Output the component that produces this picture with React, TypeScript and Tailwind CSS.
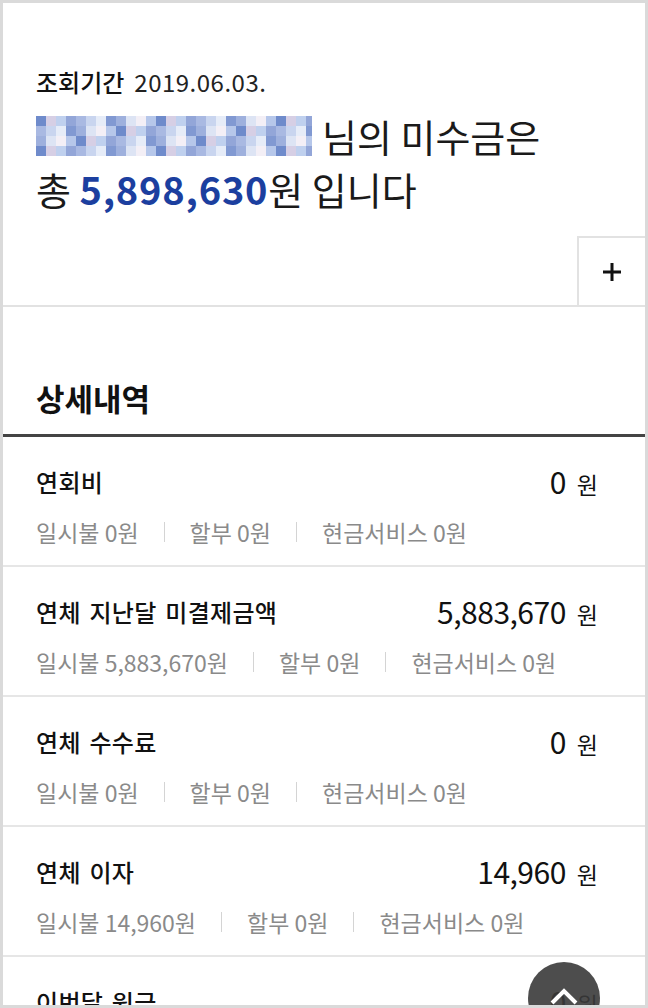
import { useMemo } from 'react'

const FONT = { fontFamily: '"Noto Sans CJK KR", "Noto Sans", sans-serif' }

type Item = {
  title: string
  amount: string
  lump: string
  installment: string
  cash: string
}

const ITEMS: Item[] = [
  { title: '연회비', amount: '0', lump: '0원', installment: '0원', cash: '0원' },
  { title: '연체 지난달 미결제금액', amount: '5,883,670', lump: '5,883,670원', installment: '0원', cash: '0원' },
  { title: '연체 수수료', amount: '0', lump: '0원', installment: '0원', cash: '0원' },
  { title: '연체 이자', amount: '14,960', lump: '14,960원', installment: '0원', cash: '0원' },
  { title: '이번달 원금', amount: '0', lump: '0원', installment: '0원', cash: '0원' },
]

const MOSAIC = ['#a9b9e2', '#c9d5ef', '#e6ecf8', '#8199d2', '#9eb0dd', '#dde4f4', '#f3eff6', '#b6c7ea', '#6f8bcb', '#d6cfe5', '#bfd0ee', '#93a6d8']

// pixelated name, drawn as a mosaic
function BlurredName() {
  const cells = useMemo(() => {
    const out: { x: number; y: number; c: string }[] = []
    let seed = 7
    for (let y = 0; y < 4; y++) {
      for (let x = 0; x < 28; x++) {
        seed = (seed * 9301 + 49297) % 233280
        out.push({ x, y, c: MOSAIC[seed % MOSAIC.length] })
      }
    }
    return out
  }, [])

  return (
    <svg width="276" height="40" viewBox="0 0 276 40" className="mr-[10px] shrink-0">
      {cells.map(cell => (
        <rect key={`${cell.x}-${cell.y}`} x={cell.x * 10} y={cell.y * 10} width="10" height="10" fill={cell.c} />
      ))}
    </svg>
  )
}

function Divider() {
  return <span className="mx-[25px] h-[20px] w-px bg-[#d4d4d4]" />
}

function DetailRow({ item }: { item: Item }) {
  return (
    <li className="h-[130px] border-b-2 border-[#e6e6e6] pl-[33px] pr-[47px] pt-[25px]">
      <div className="flex items-center justify-between leading-[30px]">
        <span className="text-[24px] font-medium tracking-[0.3px] text-[#111] [word-spacing:3px]">{item.title}</span>
        <span className="mt-[4px] text-[#111]">
          <span className="text-[30px] tracking-[-0.5px]">{item.amount}</span>
          <span className="ml-[11px] text-[23px]">원</span>
        </span>
      </div>
      <div className="mt-[15px] flex items-center text-[23px] leading-[30px] text-[#8a8a8a]">
        <span>일시불 {item.lump}</span>
        <Divider />
        <span>할부 {item.installment}</span>
        <Divider />
        <span>현금서비스 {item.cash}</span>
      </div>
    </li>
  )
}

export default function App() {
  return (
    <div className="h-[1008px] w-[648px] bg-[#dadada] p-[3px]" style={FONT}>
      <div className="relative h-full overflow-hidden bg-white">
        <section className="flex h-[304px] flex-col border-b-2 border-[#e2e2e2] pt-[64px]">
          <div className="pl-[33px]">
            <p className="flex items-center text-[24px] leading-[30px] text-[#222]">
              <span className="font-medium text-[#111]">조회기간</span>
              <span className="ml-[10px] text-[24px] tracking-[0.5px]">2019.06.03.</span>
            </p>
            <p className="mt-[12px] flex items-center text-[38px] leading-[53px] text-[#1a1a1a]">
              <BlurredName />
              님의 미수금은
            </p>
            <p className="text-[38px] leading-[53px] text-[#1a1a1a]">
              총 <span className="font-bold tracking-[0.8px] text-[#1c3f9f]">5,898,630</span>원 입니다
            </p>
          </div>
          <button className="mt-auto flex h-[69px] w-[68px] items-center justify-center self-end border-l-2 border-t-2 border-[#e2e2e2] bg-white">
            <svg width="20" height="20" viewBox="0 0 20 20">
              <path d="M10 1v18M1 10h18" stroke="#111" strokeWidth="3" />
            </svg>
          </button>
        </section>

        <div className="border-b-[3px] border-[#444] pb-[16px] pl-[33px] pt-[71px]">
          <h2 className="text-[31px] font-bold leading-[40px] text-[#111]">상세내역</h2>
        </div>

        <ul>
          {ITEMS.map(item => (
            <DetailRow key={item.title} item={item} />
          ))}
        </ul>

        <button className="absolute left-[525px] top-[959px] flex h-[72px] w-[72px] items-start justify-center rounded-full bg-[#3a3a3a]/90 pt-[24px]">
          <svg width="30" height="20" viewBox="0 0 30 20">
            <path d="M3 17L15 5l12 12" fill="none" stroke="#fff" strokeWidth="4" />
          </svg>
        </button>
      </div>
    </div>
  )
}
